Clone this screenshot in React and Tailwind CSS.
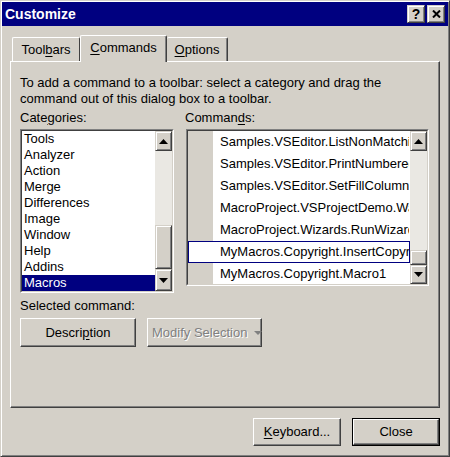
import React from "react";

const raised =
  "border border-t-white border-l-white border-r-[#404040] border-b-[#404040] shadow-[inset_-1px_-1px_0_#808080] bg-[#d4d0c8]";
const sbBtn =
  "border border-t-[#d4d0c8] border-l-[#d4d0c8] border-r-[#404040] border-b-[#404040] shadow-[inset_1px_1px_0_#fff,inset_-1px_-1px_0_#808080] bg-[#d4d0c8]";

function Arrow({ down }) {
  return (
    <svg width="9" height="5" viewBox="0 0 9 5">
      <path d={down ? "M0 0h9L4.5 5z" : "M0 5h9L4.5 0z"} fill="#000" />
    </svg>
  );
}

function ScrollBar({ thumb, down }) {
  return (
    <div className="flex w-[17px] shrink-0 flex-col">
      <div className={`${sbBtn} flex h-[20px] items-center justify-center`}>
        <Arrow />
      </div>
      <div className="flex-1 bg-[#eae8e3]" />
      <div className={sbBtn} style={{ height: thumb }} />
      <div className={`${sbBtn} flex items-center justify-center`} style={{ height: down }}>
        <Arrow down />
      </div>
    </div>
  );
}

function Sunken({ className, children }) {
  return (
    <div className={`border border-t-[#808080] border-l-[#808080] border-r-white border-b-white ${className}`}>
      <div className="flex h-full overflow-hidden border border-t-[#404040] border-l-[#404040] border-r-[#d4d0c8] border-b-[#d4d0c8]">
        {children}
      </div>
    </div>
  );
}

const categories = ["Tools", "Analyzer", "Action", "Merge", "Differences", "Image", "Window", "Help", "Addins", "Macros"];

const commands = [
  "Samples.VSEditor.ListNonMatchingLines",
  "Samples.VSEditor.PrintNumberedLines",
  "Samples.VSEditor.SetFillColumn",
  "MacroProject.VSProjectDemo.WalkProjects",
  "MacroProject.Wizards.RunWizardByName",
  "MyMacros.Copyright.InsertCopyright",
  "MyMacros.Copyright.Macro1",
];

export default function App() {
  return (
    <div className="h-[457px] w-[450px] border border-t-[#d4d0c8] border-l-[#d4d0c8] border-r-[#404040] border-b-[#404040] bg-[#d4d0c8] p-[1px] font-['Liberation_Sans',Arial,sans-serif] text-[13px] leading-[16px] text-black shadow-[inset_1px_1px_0_#fff,inset_-1px_-1px_0_#808080]">
      {/* title bar */}
      <div className="flex h-[24px] items-center bg-[#000080] pl-[3px] pr-[3px]">
        <span className="flex-1 text-[14px] font-bold text-white">Customize</span>
        <div className="flex gap-[2px]">
          <div className={`${sbBtn} flex h-[18px] w-[18px] items-center justify-center text-[14px] font-bold leading-none`}>?</div>
          <div className={`${sbBtn} flex h-[18px] w-[18px] items-center justify-center`}>
            <svg width="9" height="8" viewBox="0 0 9 8">
              <path d="M1 0.5l7 7M8 0.5l-7 7" stroke="#000" strokeWidth="2" />
            </svg>
          </div>
        </div>
      </div>

      <div className="px-[8px] pt-[9px]">
        {/* tabs */}
        <div className="relative z-10 flex h-[26px] items-end pl-[2px]">
          <div className="flex h-[24px] w-[68px] items-center justify-center rounded-t-[2px] border-t border-l border-r border-t-white border-l-white border-r-[#404040]">
            <span>
              Tool<span className="underline underline-offset-2">b</span>ars
            </span>
          </div>
          <div className="-mb-[1px] flex h-[27px] w-[87px] items-center justify-center rounded-t-[2px] border-t border-l border-r border-t-white border-l-white border-r-[#404040] bg-[#d4d0c8] pb-[2px] shadow-[inset_-1px_0_0_#808080]">
            <span>
              <span className="underline underline-offset-2">C</span>ommands
            </span>
          </div>
          <div className="flex h-[24px] w-[61px] items-center justify-center rounded-t-[2px] border-t border-r border-t-white border-r-[#404040] shadow-[inset_-1px_0_0_#808080]">
            <span>
              <span className="underline underline-offset-2">O</span>ptions
            </span>
          </div>
        </div>

        {/* panel */}
        <div className="h-[347px] w-[430px] border border-t-white border-l-white border-r-[#404040] border-b-[#404040] pl-[9px] pt-[13px] shadow-[inset_-1px_-1px_0_#808080]">
          <p>
            To add a command to a toolbar: select a category and drag the
            <br />
            command out of this dialog box to a toolbar.
          </p>

          <div className="mt-[3px] flex items-start gap-[11px]">
            <div className="w-[154px] shrink-0">
              <div>
                Cate<span className="underline underline-offset-2">g</span>ories:
              </div>
              <Sunken className="mt-[3px] h-[164px] w-[154px]">
                <div className="w-[133px] shrink-0 bg-white">
                  {categories.map((c) => (
                    <div
                      key={c}
                      className={`h-[16px] pl-[2px] leading-[16px] ${c === "Macros" ? "bg-[#000080] text-white" : ""}`}
                    >
                      {c}
                    </div>
                  ))}
                </div>
                <ScrollBar thumb={44} down={22} />
              </Sunken>
            </div>

            <div className="w-[244px] shrink-0">
              <div>
                Comman<span className="underline underline-offset-2">d</span>s:
              </div>
              <Sunken className="ml-[1px] mt-[3px] h-[157px] w-[243px]">
                <div className="w-[222px] shrink-0 overflow-hidden bg-white">
                  {commands.map((c, i) => {
                    const sel = i === 5;
                    return (
                      <div
                        key={c}
                        className={`flex h-[22px] w-[222px] items-center overflow-hidden ${sel ? "shadow-[inset_0_0_0_1px_#000080]" : ""}`}
                      >
                        <div className={`h-full w-[25px] shrink-0 ${sel ? "" : "bg-[#d4d0c8]"}`} />
                        <div className="w-[196px] shrink-0 overflow-hidden whitespace-nowrap pl-[7px]">{c}</div>
                      </div>
                    );
                  })}
                </div>
                <ScrollBar thumb={15} down={19} />
              </Sunken>
            </div>
          </div>

          <div className="mt-[5px]">Selected command:</div>

          <div className="mt-[4px] flex gap-[11px]">
            <div className={`${raised} flex h-[29px] w-[116px] items-center justify-center`}>
              <span>
                Descri<span className="underline underline-offset-2">p</span>tion
              </span>
            </div>
            <div className={`${raised} flex h-[29px] w-[115px] items-center whitespace-nowrap pl-[4px]`}>
              <span className="text-[#808080] [text-shadow:1px_1px_0_#fff]">Modify Selection</span>
              <svg className="ml-[7px] shrink-0" width="8" height="4" viewBox="0 0 8 4">
                <path d="M0 0h8L4 4z" fill="#808080" />
              </svg>
            </div>
          </div>
        </div>

        {/* footer */}
        <div className="mt-[10px] flex justify-end gap-[11px]">
          <div className={`${raised} flex h-[28px] w-[88px] items-center justify-center`}>
            <span>
              <span className="underline underline-offset-2">K</span>eyboard...
            </span>
          </div>
          <div className="h-[28px] w-[88px] border border-black">
            <div className={`${raised} flex h-full items-center justify-center`}>Close</div>
          </div>
        </div>
      </div>
    </div>
  );
}
